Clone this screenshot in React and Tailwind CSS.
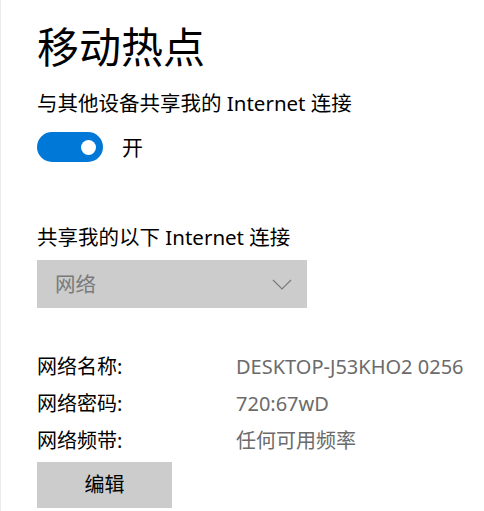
import React from 'react';

const rows = [
  ['网络名称:', 'DESKTOP-J53KHO2 0256'],
  ['网络密码:', '720:67wD'],
  ['网络频带:', '任何可用频率'],
];

const App = () => {
  return (
    <div
      className="min-h-[511px] w-[484px] bg-white border-l border-[#ececec] pl-[36px] pt-[19px] text-black"
      style={{ fontFamily: '"Noto Sans", "Noto Sans CJK SC", sans-serif' }}
    >
      <h1 className="text-[42px] leading-[56px] font-normal">移动热点</h1>

      <p className="mt-[14px] text-[20.5px] leading-[28px]">与其他设备共享我的 Internet 连接</p>

      <div className="mt-[15px] flex items-center">
        <div className="relative h-[30px] w-[66px] rounded-full bg-[#0078d7]">
          <span className="absolute right-[7px] top-[7.5px] h-[15px] w-[15px] rounded-full bg-white" />
        </div>
        <span className="ml-[19px] text-[21px] leading-[28px]">开</span>
      </div>

      <p className="mt-[61px] text-[20.5px] leading-[28px]">共享我的以下 Internet 连接</p>

      <div className="mt-[9px] flex h-[48px] w-[270px] items-center justify-between bg-[#cccccc] pl-[18px] pr-[15px]">
        <span className="text-[20.5px] leading-[28px] text-[#7a7a7a]">网络</span>
        <svg width="20" height="11" viewBox="0 0 20 11" fill="none">
          <path d="M1 1l9 9 9-9" stroke="#7a7a7a" strokeWidth="1.2" />
        </svg>
      </div>

      <div className="mt-[40px] grid grid-cols-[199px_1fr] text-[20px] leading-[37px]">
        {rows.map(([label, value]) => (
          <React.Fragment key={label}>
            <span>{label}</span>
            <span className="text-[#6b6b6b]">{value}</span>
          </React.Fragment>
        ))}
      </div>

      <button className="mt-[3px] flex h-[46px] w-[135px] items-center justify-center bg-[#cccccc] text-[20px] leading-[28px] text-black">
        编辑
      </button>
    </div>
  );
};

export default App;
